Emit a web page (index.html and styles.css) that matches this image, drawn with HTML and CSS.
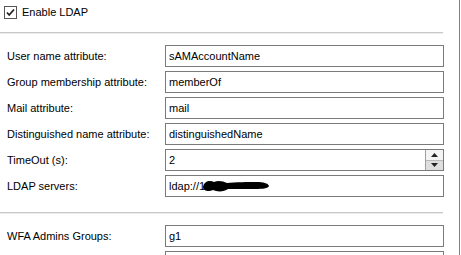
FILE: index.html
```html
<!DOCTYPE html>
<html lang="en">
<head>
    <meta charset="UTF-8">
    <title>LDAP</title>
    <link rel="stylesheet" href="styles.css">
</head>
<body>
    <div class="panel">
        <div class="enable">
            <span class="check">
                <svg width="13" height="13" viewBox="0 0 13 13">
                    <rect x="0.5" y="0.5" width="12" height="12" fill="#fff" stroke="#555"/>
                    <path d="M3 6.5 L5.2 9 L10 3.5" fill="none" stroke="#222" stroke-width="1.8"/>
                </svg>
            </span>
            <span>Enable LDAP</span>
        </div>

        <div class="sep"></div>

        <div class="form">
            <label>User name attribute:</label>
            <div class="field">sAMAccountName</div>

            <label>Group membership attribute:</label>
            <div class="field">memberOf</div>

            <label>Mail attribute:</label>
            <div class="field">mail</div>

            <label>Distinguished name attribute:</label>
            <div class="field">distinguishedName</div>

            <label>TimeOut (s):</label>
            <div class="field spin">
                <span class="value">2</span>
                <span class="buttons">
                    <span class="btn up"><svg width="7" height="4" viewBox="0 0 7 4"><path d="M0 4 L3.5 0 L7 4Z" fill="#222"/></svg></span>
                    <span class="btn down"><svg width="7" height="4" viewBox="0 0 7 4"><path d="M0 0 L3.5 4 L7 0Z" fill="#222"/></svg></span>
                </span>
            </div>

            <label>LDAP servers:</label>
            <div class="field">ldap://1<svg class="blot" width="68" height="14" viewBox="0 0 68 14"><path d="M1 8 C2 2 8 1 12 3 C16 1 21 2 25 4 C33 3 46 3 55 3 C61 3 66 4 67 7 C66 10 58 10 50 10 C41 10 32 10 26 10 C22 13 15 13 11 11 C7 13 1 12 1 8Z" fill="#000"/></svg></div>
        </div>

        <div class="sep lower"></div>

        <div class="form">
            <label>WFA Admins Groups:</label>
            <div class="field">g1</div>

            <label></label>
            <div class="field"></div>
        </div>
    </div>
</body>
</html>
```

FILE: styles.css
```css
body {
    margin: 0;
    padding: 0;
    background: #fff;
    font-family: "Liberation Sans", Arial, sans-serif;
    font-size: 11px;
    color: #000;
    overflow: hidden;
}

.panel {
    width: 459px;
    height: 255px;
    border-right: 1px solid #808080;
    overflow: hidden;
}

.enable {
    display: flex;
    align-items: center;
    gap: 5px;
    padding: 5px 0 0 4px;
    height: 14px;
}

.check {
    display: flex;
}

.sep {
    margin-top: 13px;
    width: 443px;
    border-top: 1px solid #c8c8c8;
    border-bottom: 1px solid #ececec;
}

.sep.lower {
    margin-top: 15px;
}

.form {
    display: grid;
    grid-template-columns: 158px 279px;
    row-gap: 4px;
    padding: 11px 0 0 7px;
    align-items: center;
}

.field {
    height: 20px;
    border: 1px solid #7a7a7a;
    display: flex;
    align-items: center;
    padding-left: 3px;
    box-sizing: content-box;
}

.field.spin {
    padding-left: 0;
}

.spin .value {
    flex: 1;
    padding-left: 3px;
}

.buttons {
    width: 17px;
    height: 20px;
    display: flex;
    flex-direction: column;
    border-left: 1px solid #a0a0a0;
}

.btn {
    flex: 1;
    display: flex;
    align-items: center;
    justify-content: center;
}

.btn.up {
    background: #f4f4f4;
    border-bottom: 1px solid #b8b8b8;
}

.btn.down {
    background: #dedede;
}

.blot {
    margin-left: -3px;
}
```
